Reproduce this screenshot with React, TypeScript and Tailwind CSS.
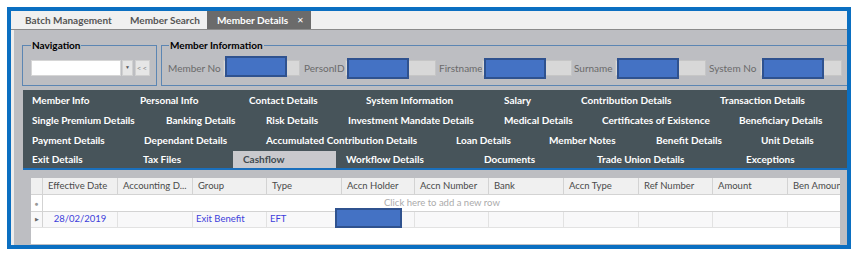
const row1 = [
  { t: "Member Info", w: "w-[108px]" },
  { t: "Personal Info", w: "w-[109px]" },
  { t: "Contact Details", w: "w-[117px]" },
  { t: "System Information", w: "w-[138px]" },
  { t: "Salary", w: "w-[77px]" },
  { t: "Contribution Details", w: "w-[139px]" },
  { t: "Transaction Details", w: "w-[120px]" },
];
const row2 = [
  { t: "Single Premium Details", w: "w-[134px]" },
  { t: "Banking Details", w: "w-[100px]" },
  { t: "Risk Details", w: "w-[82px]" },
  { t: "Investment Mandate Details", w: "w-[156px]" },
  { t: "Medical Details", w: "w-[98px]" },
  { t: "Certificates of Existence", w: "w-[137px]" },
  { t: "Beneficiary Details", w: "w-[120px]" },
];
const row3 = [
  { t: "Payment Details", w: "w-[112px]" },
  { t: "Dependant Details", w: "w-[122px]" },
  { t: "Accumulated Contribution Details", w: "w-[190px]" },
  { t: "Loan Details", w: "w-[93px]" },
  { t: "Member Notes", w: "w-[107px]" },
  { t: "Benefit Details", w: "w-[105px]" },
  { t: "Unit Details", w: "w-[100px]" },
];

const cols = [
  { t: "Effective Date", w: "w-[75px]" },
  { t: "Accounting D...", w: "w-[75px]" },
  { t: "Group", w: "w-[74px]" },
  { t: "Type", w: "w-[75px]" },
  { t: "Accn Holder", w: "w-[73px]" },
  { t: "Accn Number", w: "w-[74px]" },
  { t: "Bank", w: "w-[75px]" },
  { t: "Accn Type", w: "w-[75px]" },
  { t: "Ref Number", w: "w-[74px]" },
  { t: "Amount", w: "w-[75px]" },
  { t: "Ben Amount", w: "w-[80px]" },
];

function TabRow({ items }: { items: { t: string; w: string }[] }) {
  return (
    <div className="flex h-[20px] items-center">
      {items.map((it) => (
        <div key={it.t} className={`${it.w} shrink-0 whitespace-nowrap`}>
          {it.t}
        </div>
      ))}
    </div>
  );
}

function Field({
  label,
  lw,
  tw,
  up,
}: {
  label: string;
  lw: string;
  tw: string;
  up?: boolean;
}) {
  return (
    <div className="flex items-center shrink-0">
      <div className={`${lw} shrink-0 whitespace-nowrap text-[#6a6a6a]`}>{label}</div>
      <div className={`${tw} relative h-[16px] shrink-0 bg-[#d8d8d8] border border-[#c6c6c6]`}>
        <div
          className={`absolute left-[1px] w-[62px] h-[21px] bg-[#4472c4] border-2 border-[#2f528f] ${
            up ? "-top-[5px]" : "-top-[3px]"
          }`}
        />
      </div>
    </div>
  );
}

export default function App() {
  return (
    <div className="w-[862px] h-[260px] bg-white pt-[7px] pl-[7px] font-['Lato',sans-serif]">
      <div className="w-[844px] h-[242px] border-4 border-[#0b6fc1] flex flex-col overflow-hidden">
        {/* top tab bar */}
        <div className="h-[19px] shrink-0 bg-[#f0f0f0] border-b border-[#8a8a8a] flex text-[10px] font-bold">
          <div className="w-[109px] pl-[14px] flex items-center text-[#555] whitespace-nowrap">
            Batch Management
          </div>
          <div className="w-[87px] pl-[10px] flex items-center text-[#555] whitespace-nowrap">
            Member Search
          </div>
          <div className="w-[104px] pl-[10px] pr-[7px] flex items-center justify-between bg-[#6b6b6b] text-white whitespace-nowrap">
            <span>Member Details</span>
            <span className="text-[8px] font-normal">✕</span>
          </div>
        </div>

        {/* grey content */}
        <div className="flex-1 bg-[#bdbec2] border-l-[3px] border-[#ededed] flex flex-col overflow-hidden">
          <div className="flex pt-[8px] shrink-0">
            <fieldset className="ml-[8px] w-[135px] min-w-0 h-[48px] shrink-0 border border-[#5c86b3] pl-[8px] pr-[4px]">
              <legend className="px-[1px] text-[10px] font-bold text-black leading-[14px]">Navigation</legend>
              <div className="flex items-center mt-[8px] h-[16px]">
                <div className="w-[90px] h-[16px] shrink-0 bg-white border border-[#d6d6d6]" />
                <div className="w-[11px] h-[16px] shrink-0 ml-[1px] bg-[#e6e6e6] border border-[#d0d0d0] flex items-center justify-center text-[5px] text-[#555]">
                  ▼
                </div>
                <div className="w-[15px] h-[16px] shrink-0 ml-[2px] bg-[#e6e6e6] border border-[#d0d0d0] flex items-center justify-center text-[8px] text-[#888] tracking-[1px]">
                  &lt;&lt;
                </div>
              </div>
            </fieldset>
            <fieldset className="ml-[4px] w-[700px] min-w-0 h-[48px] shrink-0 border border-[#5c86b3] pl-[6px]">
              <legend className="ml-[1px] px-[1px] text-[10px] font-bold text-black leading-[14px]">
                Member Information
              </legend>
              <div className="flex items-center mt-[8px] h-[16px] text-[10px]">
                <Field label="Member No" lw="w-[55px]" tw="w-[77px]" up />
                <div className="w-[4px] shrink-0" />
                <Field label="PersonID" lw="w-[41px]" tw="w-[91px]" />
                <div className="w-[3px] shrink-0" />
                <Field label="Firstname" lw="w-[43px]" tw="w-[90px]" />
                <div className="w-[2px] shrink-0" />
                <Field label="Surname" lw="w-[41px]" tw="w-[91px]" />
                <div className="w-[3px] shrink-0" />
                <Field label="System No" lw="w-[51px]" tw="w-[82px]" />
              </div>
            </fieldset>
          </div>

          {/* dark tab panel */}
          <div className="mt-[4px] ml-[9px] h-[80px] shrink-0 bg-[#47545a] border-b-2 border-[#1a6fbc] pl-[9px] text-[10px] font-bold text-white">
            <TabRow items={row1} />
            <TabRow items={row2} />
            <TabRow items={row3} />
            <div className="flex h-[18px] items-center">
              <div className="w-[111px] shrink-0 whitespace-nowrap">Exit Details</div>
              <div className="w-[90px] shrink-0 whitespace-nowrap">Tax Files</div>
              <div className="w-[103px] h-[17px] mt-[1px] shrink-0 bg-[#c9c9cd] text-[#3f4a50] pl-[10px] flex items-center whitespace-nowrap">
                Cashflow
              </div>
              <div className="w-[148px] pl-[10px] shrink-0 whitespace-nowrap">Workflow Details</div>
              <div className="w-[113px] shrink-0 whitespace-nowrap">Documents</div>
              <div className="w-[149px] shrink-0 whitespace-nowrap">Trade Union Details</div>
              <div className="w-[100px] shrink-0 whitespace-nowrap">Exceptions</div>
            </div>
          </div>

          {/* grid */}
          <div className="relative mt-[8px] ml-[17px] w-[809px] h-[66px] shrink-0 bg-white overflow-hidden text-[9.5px]">
            <div className="flex h-[17px] bg-[#f0f0f0] border-b border-[#d3d3d3] text-[#4a4a4a]">
              <div className="w-[12px] shrink-0 border-r border-[#d3d3d3]" />
              {cols.map((c) => (
                <div
                  key={c.t}
                  className={`${c.w} shrink-0 border-r border-[#d3d3d3] pl-[5px] flex items-center whitespace-nowrap overflow-hidden`}
                >
                  {c.t}
                </div>
              ))}
            </div>
            <div className="flex h-[17px] border-b border-[#d3d3d3]">
              <div className="w-[12px] shrink-0 border-r border-[#d3d3d3] flex items-center justify-center text-[6px] text-[#999]">
                ●
              </div>
              <div className="pl-[341px] flex items-center text-[#ababab] whitespace-nowrap">
                Click here to add a new row
              </div>
            </div>
            <div className="flex h-[16px] bg-[#f8f8f9] border-b border-[#e2e2e2] text-[#3d3ddb]">
              <div className="w-[12px] shrink-0 border-r border-[#d3d3d3] flex items-center justify-center text-[5px] text-[#666]">
                ▶
              </div>
              {cols.map((c, i) => (
                <div
                  key={c.t}
                  className={`${c.w} shrink-0 border-r border-[#e2e2e2] flex items-center whitespace-nowrap overflow-hidden ${
                    i === 0 ? "justify-center" : "pl-[3px]"
                  }`}
                >
                  {i === 0 ? "28/02/2019" : i === 2 ? "Exit Benefit" : i === 3 ? "EFT" : ""}
                </div>
              ))}
            </div>
            <div className="absolute left-[304px] top-[30px] w-[67px] h-[20px] bg-[#4472c4] border-2 border-[#2f528f]" />
          </div>
        </div>
      </div>
    </div>
  );
}
